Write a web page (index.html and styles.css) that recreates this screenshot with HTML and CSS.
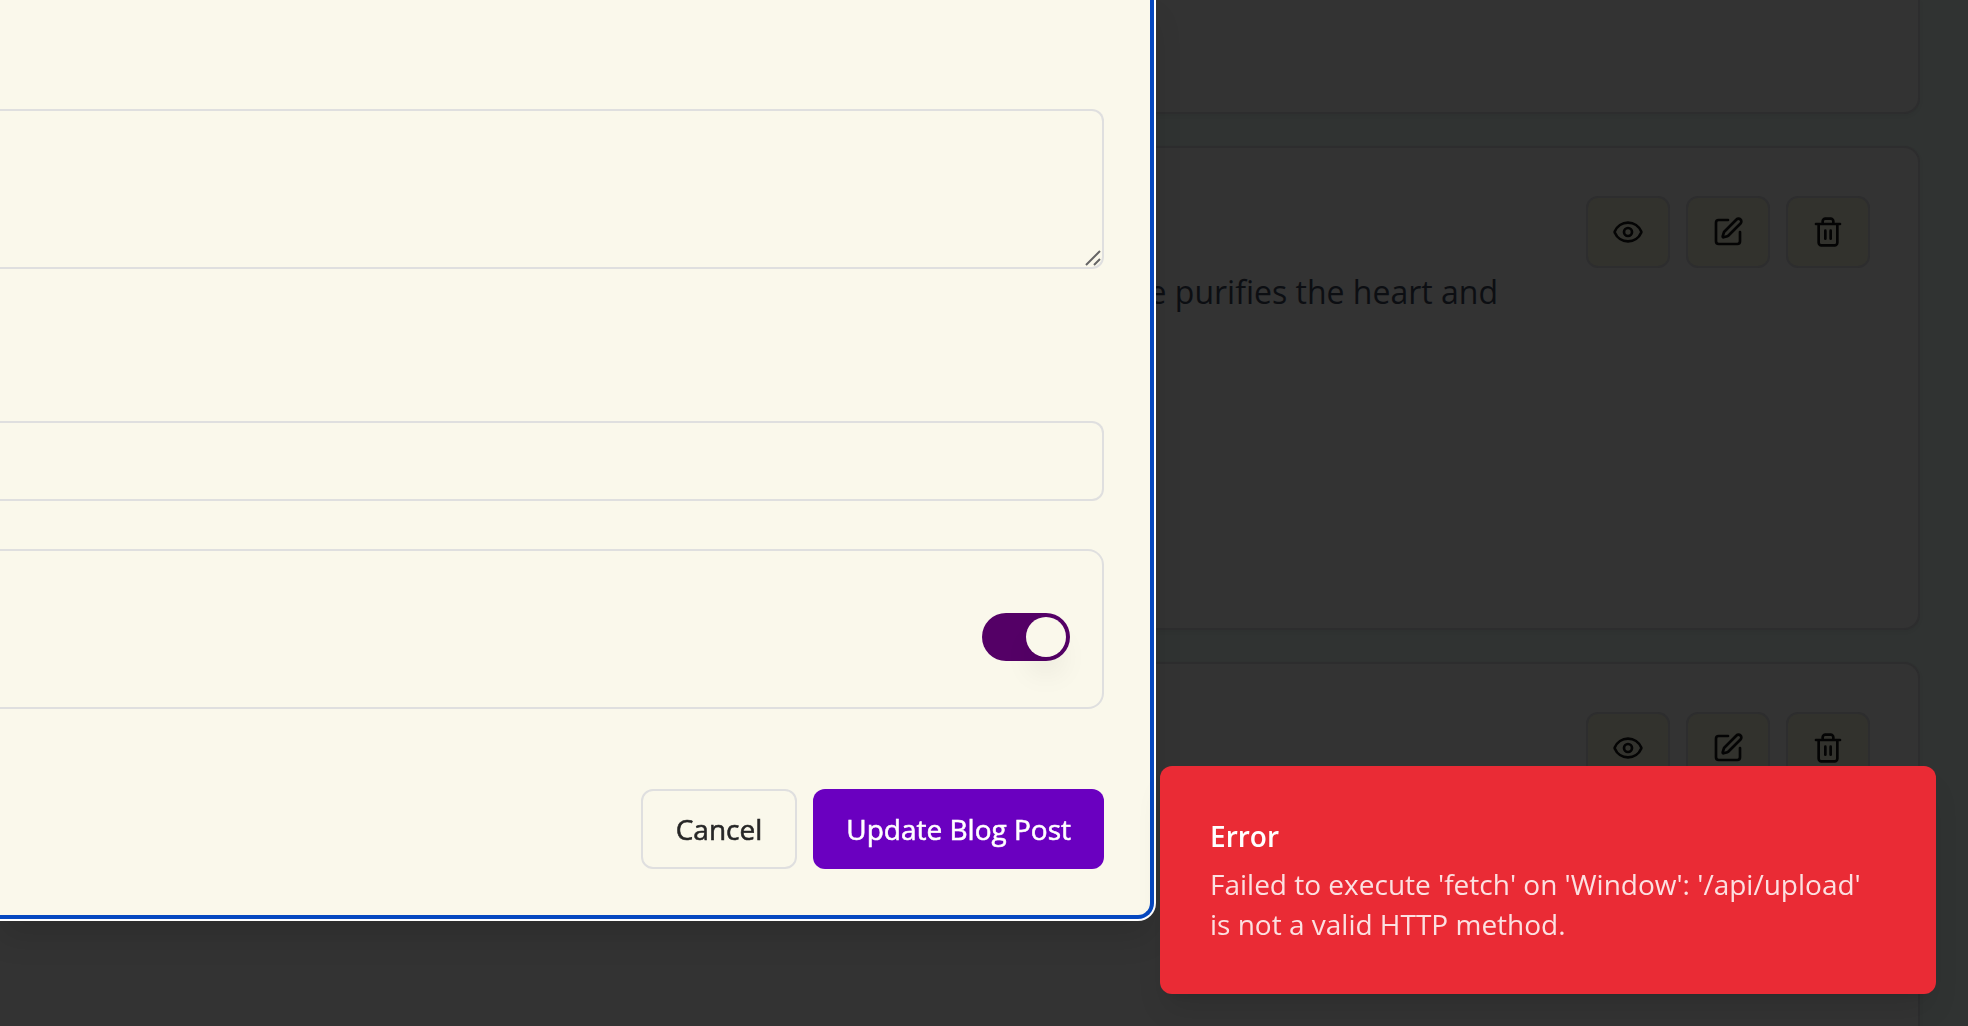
FILE: index.html
```html
<!DOCTYPE html>
<html lang="en">
<head>
<meta charset="utf-8">
<title>Edit Blog Post</title>
<link rel="stylesheet" href="styles.css">
</head>
<body>
<svg class="sprite" aria-hidden="true">
  <symbol id="eye" viewBox="0 0 24 24"><path d="M2.062 12.348a1 1 0 0 1 0-.696 10.75 10.75 0 0 1 19.876 0 1 1 0 0 1 0 .696 10.75 10.75 0 0 1-19.876 0"/><circle cx="12" cy="12" r="3"/></symbol>
  <symbol id="pen" viewBox="0 0 24 24"><path d="M12 3H5a2 2 0 0 0-2 2v14a2 2 0 0 0 2 2h14a2 2 0 0 0 2-2v-7"/><path d="M18.375 2.625a1 1 0 0 1 3 3l-9.013 9.014a2 2 0 0 1-.853.505l-2.873.84a.5.5 0 0 1-.62-.62l.84-2.873a2 2 0 0 1 .506-.852z"/></symbol>
  <symbol id="trash" viewBox="0 0 24 24"><path d="M3 6h18M19 6v14c0 1-1 2-2 2H7c-1 0-2-1-2-2V6M8 6V4c0-1 1-2 2-2h4c1 0 2 1 2 2v2M10 11v6M14 11v6"/></symbol>
</svg>

<main class="posts">
  <article class="card card-first"></article>
  <article class="card">
    <p class="excerpt">e purifies the heart and</p>
    <div class="actions">
      <button class="icon-button" type="button" aria-label="View"><svg class="icon"><use href="#eye"/></svg></button>
      <button class="icon-button" type="button" aria-label="Edit"><svg class="icon"><use href="#pen"/></svg></button>
      <button class="icon-button" type="button" aria-label="Delete"><svg class="icon"><use href="#trash"/></svg></button>
    </div>
  </article>
  <article class="card card-last">
    <div class="actions">
      <button class="icon-button" type="button" aria-label="View"><svg class="icon"><use href="#eye"/></svg></button>
      <button class="icon-button" type="button" aria-label="Edit"><svg class="icon"><use href="#pen"/></svg></button>
      <button class="icon-button" type="button" aria-label="Delete"><svg class="icon"><use href="#trash"/></svg></button>
    </div>
  </article>
</main>

<form class="dialog" role="dialog" aria-label="Edit blog post">
  <div class="excerpt-wrap">
    <textarea class="field excerpt-field" aria-label="Excerpt"></textarea>
    <svg class="grip" viewBox="0 0 16 16" aria-hidden="true"><path d="M1 15 15 1M9 15l6-6"/></svg>
  </div>
  <input class="field tags-field" type="text" aria-label="Tags">
  <div class="setting">
    <input class="switch" type="checkbox" role="switch" aria-label="Published" checked>
  </div>
  <div class="footer">
    <button class="button button-outline" type="button">Cancel</button>
    <button class="button button-primary" type="button">Update Blog Post</button>
  </div>
</form>

<div class="toast" role="alert">
  <strong class="toast-title">Error</strong>
  <p class="toast-text">Failed to execute 'fetch' on 'Window': '/api/upload' is not a valid HTTP method.</p>
</div>
</body>
</html>
```
FILE: styles.css
```css
* {
  box-sizing: border-box;
}

body {
  margin: 0;
  background: #303332;
  font-family: "Open Sans", "Noto Sans", sans-serif;
  font-size: 28px;
  line-height: 40px;
}

.sprite {
  display: none;
}

.icon {
  width: 32px;
  height: 32px;
  fill: none;
  stroke: #040404;
  stroke-width: 2;
  stroke-linecap: round;
  stroke-linejoin: round;
}

/* Dimmed list behind the dialog */
.posts {
  display: flex;
  flex-direction: column;
  gap: 32px;
  min-height: 100vh;
  padding-right: 48px;
}

.card {
  display: flex;
  justify-content: flex-end;
  align-items: flex-start;
  gap: 88px;
  min-height: 484px;
  padding: 48px;
  border: 2px solid #2d2d2e;
  border-left: 0;
  border-radius: 0 16px 16px 0;
  background: #333;
  box-shadow: 0 2px 4px rgba(0, 0, 0, 0.05);
}

.card-first {
  min-height: 114px;
  border-top: 0;
  border-top-right-radius: 0;
}

.card-last {
  flex: 1;
  min-height: 200px;
  border-bottom: 0;
  border-bottom-right-radius: 0;
}

.excerpt {
  margin: 70px 0 0;
  color: #0c0e12;
  font-size: 32px;
  line-height: 52px;
}

.actions {
  display: flex;
  gap: 16px;
}

.icon-button {
  display: flex;
  align-items: center;
  justify-content: center;
  width: 84px;
  height: 72px;
  padding: 0;
  border: 2px solid #2d2d2e;
  border-radius: 12px;
  background: #32322d;
}

/* Dialog, running off the top and left of the window */
.dialog {
  position: fixed;
  left: 0;
  right: 814px;
  top: 0;
  display: flex;
  flex-direction: column;
  padding: 109px 46px 46px 0;
  border: solid #0648c0;
  border-width: 0 4px 4px 0;
  border-bottom-right-radius: 16px;
  background: #faf8eb;
  box-shadow: 0 0 0 2px #fff, 0 20px 30px rgba(0, 0, 0, 0.1);
}

.field {
  width: 100%;
  border: 2px solid #dfdfdf;
  border-left: 0;
  border-radius: 0 12px 12px 0;
  background: transparent;
  padding: 16px 24px;
  font: inherit;
}

.excerpt-wrap {
  position: relative;
  margin-bottom: 152px;
}

.excerpt-field {
  display: block;
  height: 160px;
  resize: none;
}

.grip {
  position: absolute;
  right: 3px;
  bottom: 3px;
  width: 16px;
  height: 16px;
  fill: none;
  stroke: #666;
  stroke-width: 2;
  pointer-events: none;
}

.tags-field {
  height: 80px;
  margin-bottom: 48px;
}

.setting {
  display: flex;
  align-items: center;
  justify-content: flex-end;
  height: 160px;
  padding: 32px;
  border: 2px solid #dfdfdf;
  border-left: 0;
  border-radius: 0 16px 16px 0;
}

.switch {
  appearance: none;
  display: flex;
  justify-content: flex-end;
  width: 88px;
  height: 48px;
  margin: 16px 0 0;
  padding: 4px;
  border-radius: 24px;
  background: #540066;
}

.switch::before {
  content: "";
  width: 40px;
  height: 40px;
  border-radius: 50%;
  background: #faf8eb;
  box-shadow: 0 20px 30px -6px rgba(0, 0, 0, 0.1);
}

.footer {
  display: flex;
  justify-content: flex-end;
  gap: 16px;
  margin-top: 80px;
}

.button {
  height: 80px;
  padding: 0 33px;
  border: 0;
  border-radius: 12px;
  font: inherit;
  font-weight: 500;
  -webkit-text-stroke: 0.02em currentColor;
}

.button-outline {
  border: 2px solid #dfdfdf;
  background: transparent;
  color: #262626;
}

.button-primary {
  background: #6a00c0;
  color: #fff;
}

.toast {
  position: fixed;
  right: 32px;
  bottom: 32px;
  width: 776px;
  padding: 50px;
  border-radius: 12px;
  background: #ea2b35;
  color: #fff;
  box-shadow: 0 20px 30px -6px rgba(0, 0, 0, 0.1), 0 8px 12px -8px rgba(0, 0, 0, 0.1);
}

.toast-title {
  display: block;
  margin-bottom: 8px;
  font-weight: 600;
}

.toast-text {
  margin: 0;
  color: #fce0e1;
}
```
